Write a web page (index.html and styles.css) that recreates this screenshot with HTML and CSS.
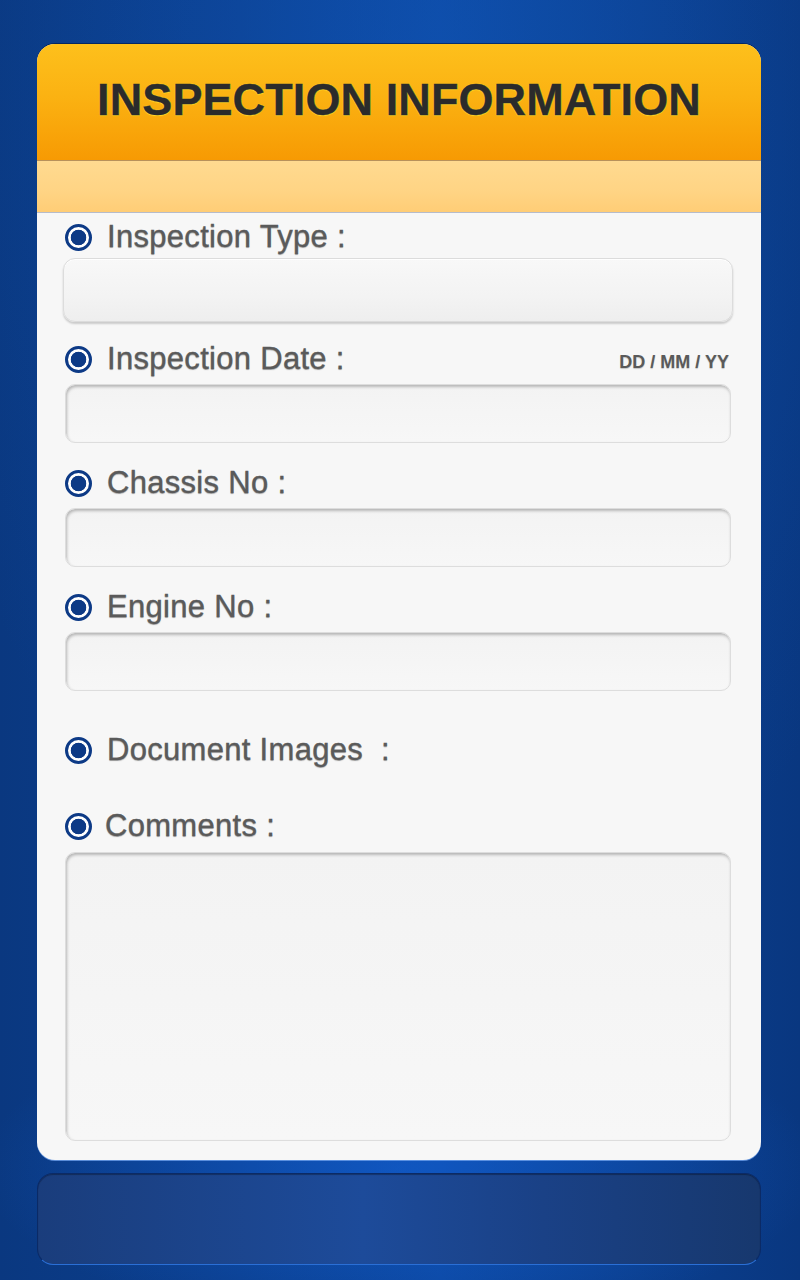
FILE: index.html
```html
<!DOCTYPE html>
<html>
<head>
<meta charset="utf-8">
<link rel="stylesheet" href="styles.css">
</head>
<body>
<div class="screen">
  <div class="card">
    <div class="card-header">
      <h1 class="title">INSPECTION INFORMATION</h1>
    </div>
    <div class="card-band"></div>
    <div class="card-body">
      <div class="label-row row-first">
        <span class="radio"></span><span class="label">Inspection Type :</span>
      </div>
      <div class="field field-raised"></div>

      <div class="label-row row-2">
        <span class="radio"></span><span class="label">Inspection Date :</span>
        <span class="hint">DD / MM / YY</span>
      </div>
      <div class="field field-inset"></div>

      <div class="label-row row-n">
        <span class="radio"></span><span class="label">Chassis No :</span>
      </div>
      <div class="field field-inset"></div>

      <div class="label-row row-n">
        <span class="radio"></span><span class="label">Engine No :</span>
      </div>
      <div class="field field-inset"></div>

      <div class="label-row row-far">
        <span class="radio"></span><span class="label">Document Images&nbsp;&nbsp;:</span>
      </div>

      <div class="label-row row-far2">
        <span class="radio"></span><span class="label label-tight">Comments :</span>
      </div>
      <div class="field field-inset field-area"></div>
    </div>
  </div>
  <div class="bottom-panel"></div>
</div>
</body>
</html>
```

FILE: styles.css
```css
html, body {
  margin: 0;
  padding: 0;
}
body {
  width: 800px;
  height: 1280px;
  overflow: hidden;
  font-family: "Liberation Sans", Arial, sans-serif;
  background:
    radial-gradient(ellipse 420px 160px at 400px 1168px, rgba(20, 100, 220, 0.55), rgba(20, 100, 220, 0) 100%),
    radial-gradient(ellipse 520px 900px at 430px 120px, rgba(18, 90, 190, 0.45), rgba(18, 90, 190, 0) 100%),
    linear-gradient(90deg, #0a3880 0%, #0b3f8f 30%, #0c47a0 55%, #0b3f8f 80%, #093780 100%);
}
.screen {
  padding: 44px 39px 0 37px;
}
.card {
  border-radius: 18px;
  background: #f7f7f7;
  overflow: hidden;
  box-shadow: 0 -1px 0 rgba(0, 20, 60, 0.55), 0 1px 0 rgba(110, 160, 235, 0.8);
}
.card-header {
  height: 116px;
  background: linear-gradient(180deg, #fdc01c 0%, #fbb212 45%, #f79a03 100%);
  border-bottom: 1px solid #b8915a;
  display: flex;
  justify-content: center;
  align-items: center;
}
.title {
  margin: 0 0 6px 0;
  font-size: 45px;
  font-weight: bold;
  color: #2b2b2b;
  letter-spacing: 0.1px;
  text-shadow: 0 0 1px #ffe23a, 0 0 1px #ffe23a, 0 1px 1px rgba(255, 220, 40, 0.9);
  -webkit-text-stroke: 0.4px #2b2b2b;
  line-height: 1;
}
.card-band {
  height: 51px;
  background: linear-gradient(180deg, #ffda90 0%, #ffd484 60%, #ffcd76 100%);
  border-bottom: 1px solid #b6bccb;
}
.card-body {
  padding: 6px 30px 19px 28px;
}
.label-row {
  height: 36px;
  display: flex;
  align-items: center;
}
.row-first { margin-top: 0; }
.row-2 { margin-top: 19px; }
.row-n { margin-top: 22px; }
.row-far { margin-top: 41px; }
.row-far2 { margin-top: 40px; }
.radio {
  box-sizing: border-box;
  width: 27px;
  height: 27px;
  border-radius: 50%;
  border: 3px solid #0d3a86;
  background: radial-gradient(circle, #0d3a86 0, #0d3a86 7.5px, #ffffff 8.1px);
  flex: none;
}
.label {
  margin-left: 15px;
  font-size: 31px;
  letter-spacing: 0.3px;
  color: #5a5a5a;
  -webkit-text-stroke: 0.3px #5a5a5a;
  text-shadow: 0 1px 1px rgba(0, 0, 0, 0.3);
  line-height: 36px;
}
.label-tight {
  margin-left: 13px;
}
.hint {
  margin-left: auto;
  margin-right: 2px;
  margin-top: 6px;
  font-size: 18px;
  font-weight: bold;
  color: #5a5a5a;
  text-shadow: 0 1px 1px rgba(0, 0, 0, 0.2);
}
.field {
  box-sizing: border-box;
}
.field-raised {
  margin: 3px -2px 0 -2px;
  height: 64px;
  border-radius: 12px;
  border: 1px solid #dcdcdc;
  background: linear-gradient(180deg, #f8f8f8 0%, #f3f3f3 60%, #eeeeee 100%);
  box-shadow: 0 2px 2px rgba(0, 0, 0, 0.18), inset 0 1px 0 #ffffff;
}
.field-inset {
  margin-top: 7px;
  height: 59px;
  border-radius: 10px;
  border: 1px solid #dddddd;
  background: linear-gradient(180deg, #f3f3f3 0%, #f7f7f7 100%);
  box-shadow: inset 1px 2px 3px rgba(0, 0, 0, 0.25);
}
.field-area {
  margin-top: 8px;
  height: 289px;
}
.bottom-panel {
  box-sizing: border-box;
  margin-top: 13px;
  height: 92px;
  border-radius: 16px;
  background: linear-gradient(90deg, #1a3d7c 0%, #1d4b9a 45%, #1a4186 70%, #17386e 100%);
  border: 1px solid #0b2a66;
  border-bottom-color: #2a6fd6;
  box-shadow: inset 0 1px 1px rgba(0, 0, 0, 0.3);
}
```
